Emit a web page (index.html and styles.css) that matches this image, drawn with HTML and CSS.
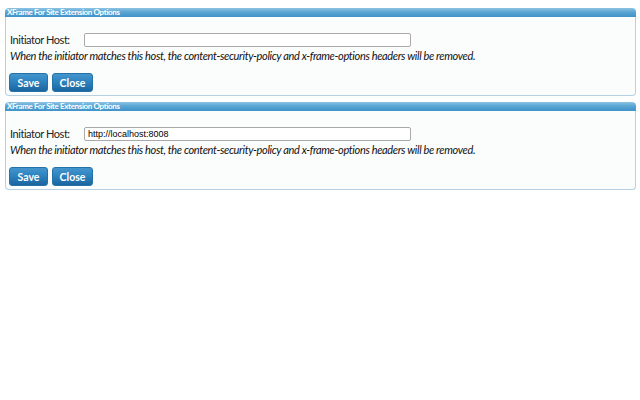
FILE: index.html
```html
<!DOCTYPE html>
<html>
<head>
<meta charset="utf-8">
<link rel="stylesheet" href="styles.css">
</head>
<body>
<div class="panel">
  <div class="panel-head">XFrame For Site Extension Options</div>
  <div class="panel-body">
    <div class="row">
      <label class="label">Initiator Host:</label>
      <input class="host" type="text" value="">
    </div>
    <div class="help">When the initiator matches this host, the content-security-policy and x-frame-options headers will be removed.</div>
    <div class="buttons">
      <button class="btn save">Save</button>
      <button class="btn close">Close</button>
    </div>
  </div>
</div>
<div class="panel">
  <div class="panel-head">XFrame For Site Extension Options</div>
  <div class="panel-body">
    <div class="row">
      <label class="label">Initiator Host:</label>
      <input class="host" type="text" value="http://localhost:8008">
    </div>
    <div class="help">When the initiator matches this host, the content-security-policy and x-frame-options headers will be removed.</div>
    <div class="buttons">
      <button class="btn save">Save</button>
      <button class="btn close">Close</button>
    </div>
  </div>
</div>
</body>
</html>
```
FILE: styles.css
```css
body {
  margin: 8px 4px 0 5px;
  background: #ffffff;
  font-family: Lato, "Open Sans", sans-serif;
  color: #222;
}
.panel {
  margin-bottom: 6px;
}
.panel-head {
  height: 9px;
  line-height: 9px;
  padding-left: 2px;
  font-size: 8px;
  font-weight: bold;
  color: #ffffff;
  background: linear-gradient(#8ec3e3, #5aa5d3 45%, #3f92c8);
  border-radius: 4px 4px 0 0;
  letter-spacing: -0.35px;
  overflow: hidden;
  white-space: nowrap;
}
.panel-body {
  border: 1px solid #b6d1e4;
  border-top: none;
  border-radius: 0 0 4px 4px;
  background: #fbfdfd;
  padding: 15px 4px 3px 4px;
}
.row {
  display: flex;
  align-items: center;
  height: 15px;
}
.label {
  width: 74px;
  font-size: 11px;
  letter-spacing: -0.45px;
}
.host {
  box-sizing: border-box;
  width: 327px;
  height: 14px;
  margin: 0;
  padding: 0 3px;
  border: 1px solid #a9a9a9;
  border-radius: 2px;
  background: #fff;
  font-family: "Liberation Sans", Arial, sans-serif;
  font-size: 9px;
  color: #000;
}
.help {
  margin-top: 2px;
  font-size: 11px;
  font-style: italic;
  letter-spacing: -0.35px;
  color: #111;
}
.buttons {
  display: flex;
  gap: 4px;
  margin-top: 11px;
  margin-left: -1px;
}
.btn {
  height: 19px;
  padding: 0;
  border: 1px solid #2373a8;
  border-radius: 3px;
  background: linear-gradient(#4495cc, #2d83c0 45%, #1b659e);
  color: #fff;
  font-family: Lato, "Open Sans", sans-serif;
  font-size: 10.5px;
  font-weight: bold;
}
.save { width: 39px; }
.close { width: 41px; }
```
